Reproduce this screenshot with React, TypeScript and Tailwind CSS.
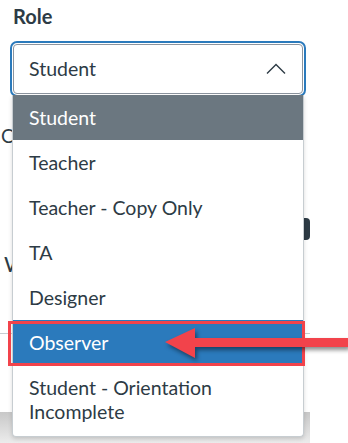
const roles = [
  "Student",
  "Teacher",
  "Teacher - Copy Only",
  "TA",
  "Designer",
  "Observer",
];

export default function App() {
  return (
    <div
      className="relative w-[348px] h-[443px] overflow-hidden bg-white text-[#2d3b45]"
      style={{ fontFamily: "Lato, 'Noto Sans', sans-serif" }}
    >
      {/* page behind the menu */}
      <div className="relative flex h-full w-[310px] flex-col">
        <div className="flex flex-col gap-[15px] px-[13px] pt-[3px]">
          <div className="text-[20px] font-bold leading-[26px]">Role</div>
          <div className="flex h-[50px] w-[290px] items-center justify-between rounded-[4px] border border-[#8d959f] px-[15px] outline-2 outline-offset-[1px] outline-[#2b7abc]">
            <span className="text-[19.5px]">Student</span>
            <svg width="20" height="12" viewBox="0 0 20 12" className="mr-[1px]">
              <path d="M1 10.5 L10 1.5 L19 10.5" fill="none" stroke="#2d3b45" strokeWidth="1.4" />
            </svg>
          </div>
        </div>
        <div className="mt-[28px] pl-[1px] text-[19px]">Cu</div>
        <div className="mt-[96px] pl-[4px] text-[22px]">Wh</div>
        <div className="absolute left-0 right-0 top-[333px] h-px bg-[#c7cdd1]" />
        <div className="absolute right-0 top-[218px] h-[22px] w-[40px] rounded-[4px] bg-[#2d3b45]" />
        <div className="absolute left-0 right-0 top-[412px] h-[31px] bg-gradient-to-b from-[#c8c8c8] to-[#ececec]" />
      </div>

      {/* dropdown menu */}
      <ul className="absolute left-[12px] top-[95px] w-[292px] rounded-b-[4px] border border-t-0 border-[#c7cdd1] bg-white shadow-[0_2px_4px_rgba(0,0,0,0.15)]">
        {roles.map((role, i) => (
          <li
            key={role}
            className={`flex h-[45px] items-center pl-[16px] text-[19.5px] ${
              i === 0
                ? "bg-[#6b7780] text-white"
                : i === 5
                ? "bg-[#2b7abc] text-white"
                : ""
            }`}
          >
            {role}
          </li>
        ))}
        <li className="pl-[16px] pt-[11px] pb-[12px] text-[19.5px] leading-[24px]">
          Student - Orientation
          <br />
          Incomplete
        </li>
      </ul>

      {/* annotation */}
      <div className="absolute left-[8px] top-[321px] h-[45px] w-[297px] border-[3px] border-[#f2434b]" />
      <svg
        className="absolute left-[160px] top-[324px]"
        width="188"
        height="40"
        viewBox="0 0 188 40"
        style={{ filter: "drop-shadow(2px 3px 2px rgba(0,0,0,0.45))" }}
      >
        <path d="M5 18 L35 4 L35 14 L188 14 L188 23 L35 23 L35 34 Z" fill="#f2434b" />
      </svg>
    </div>
  );
}
